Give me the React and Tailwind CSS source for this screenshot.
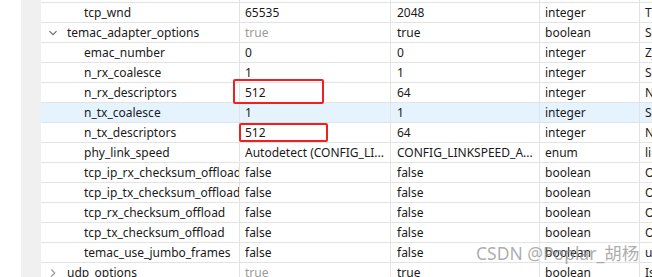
import React from "react";

const rows = [
  { name: "tcp_wnd", lvl: 1, v: "65535", d: "2048", t: "integer", x: "TCP Window" },
  { name: "temac_adapter_options", lvl: 0, open: true, v: "true", gray: true, d: "true", t: "boolean", x: "Settings" },
  { name: "emac_number", lvl: 1, v: "0", d: "0", t: "integer", x: "Zynq" },
  { name: "n_rx_coalesce", lvl: 1, v: "1", d: "1", t: "integer", x: "Setting" },
  { name: "n_rx_descriptors", lvl: 1, v: "512", d: "64", t: "integer", x: "Number" },
  { name: "n_tx_coalesce", lvl: 1, v: "1", d: "1", t: "integer", x: "Setting", hl: true },
  { name: "n_tx_descriptors", lvl: 1, v: "512", d: "64", t: "integer", x: "Number" },
  { name: "phy_link_speed", lvl: 1, v: "Autodetect (CONFIG_LI...", d: "CONFIG_LINKSPEED_A...", t: "enum", x: "link" },
  { name: "tcp_ip_rx_checksum_offload", lvl: 1, v: "false", d: "false", t: "boolean", x: "Offload" },
  { name: "tcp_ip_tx_checksum_offload", lvl: 1, v: "false", d: "false", t: "boolean", x: "Offload" },
  { name: "tcp_rx_checksum_offload", lvl: 1, v: "false", d: "false", t: "boolean", x: "Offload" },
  { name: "tcp_tx_checksum_offload", lvl: 1, v: "false", d: "false", t: "boolean", x: "Offload" },
  { name: "temac_use_jumbo_frames", lvl: 1, v: "false", d: "false", t: "boolean", x: "use" },
  { name: "udp_options", lvl: 0, open: false, v: "true", gray: true, d: "true", t: "boolean", x: "Is" },
];

function Chevron({ open }) {
  return (
    <svg width="10" height="10" viewBox="0 0 10 10" className="shrink-0">
      {open ? (
        <path d="M1.5 3.2 L5 6.7 L8.5 3.2" fill="none" stroke="#6b6b6b" strokeWidth="1.2" />
      ) : (
        <path d="M3.3 1.5 L6.8 5 L3.3 8.5" fill="none" stroke="#9a9a9a" strokeWidth="1.2" />
      )}
    </svg>
  );
}

export default function App() {
  return (
    <div
      className="relative w-[652px] h-[277px] overflow-hidden bg-white text-[12px] text-[#1a1a1a]"
      style={{ fontFamily: '"Noto Sans", "Noto Sans CJK SC", sans-serif' }}
    >
      <div className="flex h-full">
        <div className="w-[21px] shrink-0 bg-white" />
        <div className="w-[20px] shrink-0 bg-[#f0f0f0]" />
        <div className="flex flex-col flex-1 min-w-0">
          <div className="h-[3px] shrink-0 border-b border-[#e3e3e3] flex">
            <div className="w-[199px] border-r border-[#e3e3e3]" />
            <div className="w-[151px] border-r border-[#e3e3e3]" />
            <div className="w-[149px] border-r border-[#e3e3e3]" />
            <div className="w-[100px] border-r border-[#e3e3e3]" />
          </div>
          {rows.map((r, i) => (
            <div
              key={i}
              className={`flex h-[20px] shrink-0 border-b border-[#e3e3e3] leading-[19px] ${r.hl ? "bg-[#e5f3ff]" : ""}`}
            >
              <div className="w-[199px] shrink-0 border-r border-[#e3e3e3] flex items-center overflow-hidden whitespace-nowrap">
                {r.lvl === 0 ? (
                  <div className="flex items-center gap-[9px] pl-[7px]">
                    <Chevron open={r.open} />
                    <span>{r.name}</span>
                  </div>
                ) : (
                  <span className="pl-[43px]">{r.name}</span>
                )}
              </div>
              <div className={`w-[151px] shrink-0 border-r border-[#e3e3e3] pl-[5px] overflow-hidden whitespace-nowrap ${r.gray ? "text-[#9a9a9a]" : ""}`}>
                {r.v}
              </div>
              <div className="w-[149px] shrink-0 border-r border-[#e3e3e3] pl-[6px] overflow-hidden whitespace-nowrap">
                {r.d}
              </div>
              <div className="w-[100px] shrink-0 border-r border-[#e3e3e3] pl-[5px] overflow-hidden whitespace-nowrap">
                {r.t}
              </div>
              <div className="flex-1 min-w-0 pl-[5px] overflow-hidden whitespace-nowrap">{r.x}</div>
            </div>
          ))}
        </div>
      </div>

      <div className="absolute left-[233px] top-[79px] w-[91px] h-[25px] border-2 border-[#f02020] rounded-[2px]" />
      <div className="absolute left-[239px] top-[123px] w-[89px] h-[19px] border-2 border-[#f02020] rounded-[2px]" />

      <div className="absolute left-[476px] top-[242px] text-[17.5px] leading-[22px] text-[#8a8a8a]/70 whitespace-nowrap">
        CSDN @Poplar_胡杨
      </div>
    </div>
  );
}
